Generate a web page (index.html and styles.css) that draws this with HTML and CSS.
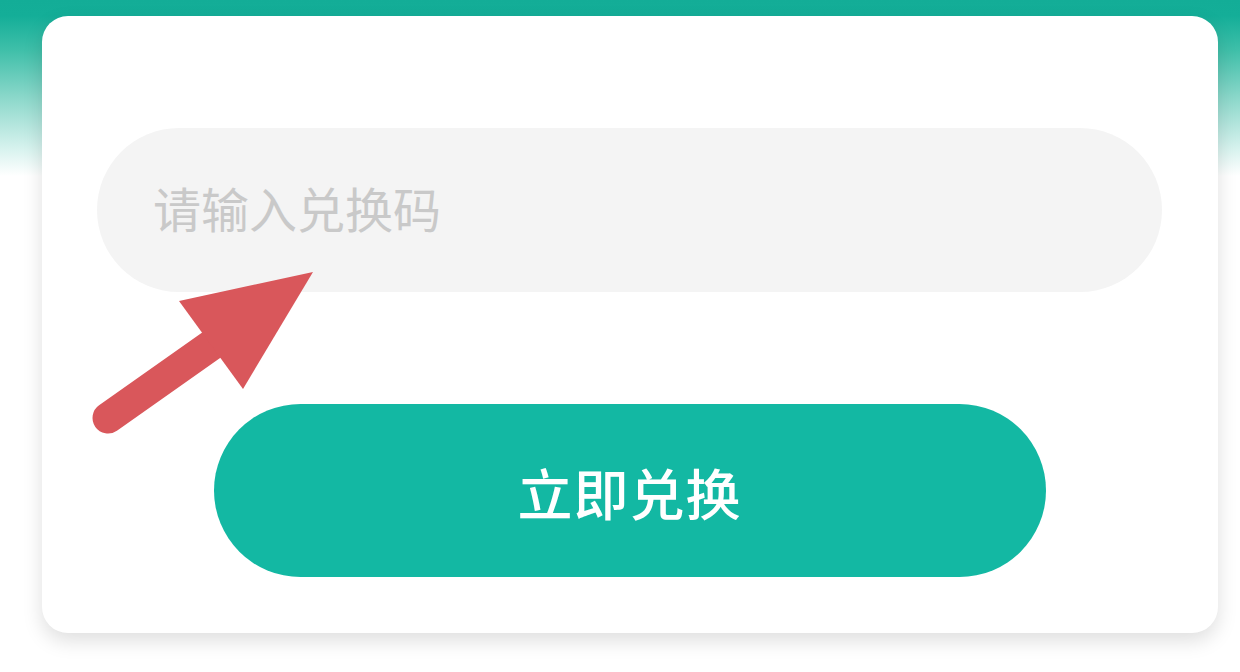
FILE: index.html
```html
<!DOCTYPE html>
<html lang="zh-CN">
<head>
  <meta charset="UTF-8">
  <meta name="viewport" content="width=device-width, initial-scale=1.0">
  <title>兑换码</title>
  <link rel="stylesheet" href="styles.css">
</head>
<body>
  <div class="page">
    <div class="redeem-card">
      <input class="code-input" type="text" placeholder="请输入兑换码">
      <button class="redeem-btn" type="button">立即兑换</button>

      <!-- hint arrow pointing at the input -->
      <svg class="hint-arrow" width="240" height="190" viewBox="85 260 240 190">
        <line x1="108" y1="418" x2="220" y2="339" stroke="#d9575b" stroke-width="31" stroke-linecap="round"/>
        <polygon points="179,301 313,272 243,389" fill="#d9575b"/>
      </svg>
    </div>
  </div>
</body>
</html>
```

FILE: styles.css
```css
html, body {
  margin: 0;
  padding: 0;
}
body {
  font-family: "Noto Sans CJK SC", "Noto Sans", sans-serif;
  background: linear-gradient(180deg, #13ad97 0, #14ae98 16px, #3fbfa9 50px, #8fd9cc 100px, #d9f3ef 150px, #ffffff 176px);
  background-repeat: no-repeat;
  background-color: #fff;
  min-height: 672px;
  overflow: hidden;
}
.page {
  padding: 16px 22px 0 42px;
}
.redeem-card {
  position: relative;
  background: #fff;
  border-radius: 26px;
  box-shadow: 0 8px 20px rgba(0, 0, 0, 0.13);
  height: 617px;
  box-sizing: border-box;
  padding: 112px 56px 0 55px;
  display: flex;
  flex-direction: column;
  align-items: center;
  gap: 112px;
}
.code-input {
  width: 100%;
  height: 164px;
  box-sizing: border-box;
  border: none;
  outline: none;
  border-radius: 82px;
  background: #f4f4f4;
  padding: 0 0 6px 56px;
  font-family: "Noto Sans CJK SC", sans-serif;
  font-size: 48px;
  color: #333;
}
.code-input::placeholder {
  color: #c9c9c9;
}
.redeem-btn {
  width: 832px;
  height: 173px;
  border: none;
  border-radius: 87px;
  background: #13b8a3;
  color: #fff;
  font-family: "Noto Sans CJK SC", sans-serif;
  font-size: 55px;
  font-weight: 500;
  letter-spacing: 1px;
  cursor: pointer;
}
.hint-arrow {
  position: absolute;
  left: 43px;
  top: 244px;
}
```
